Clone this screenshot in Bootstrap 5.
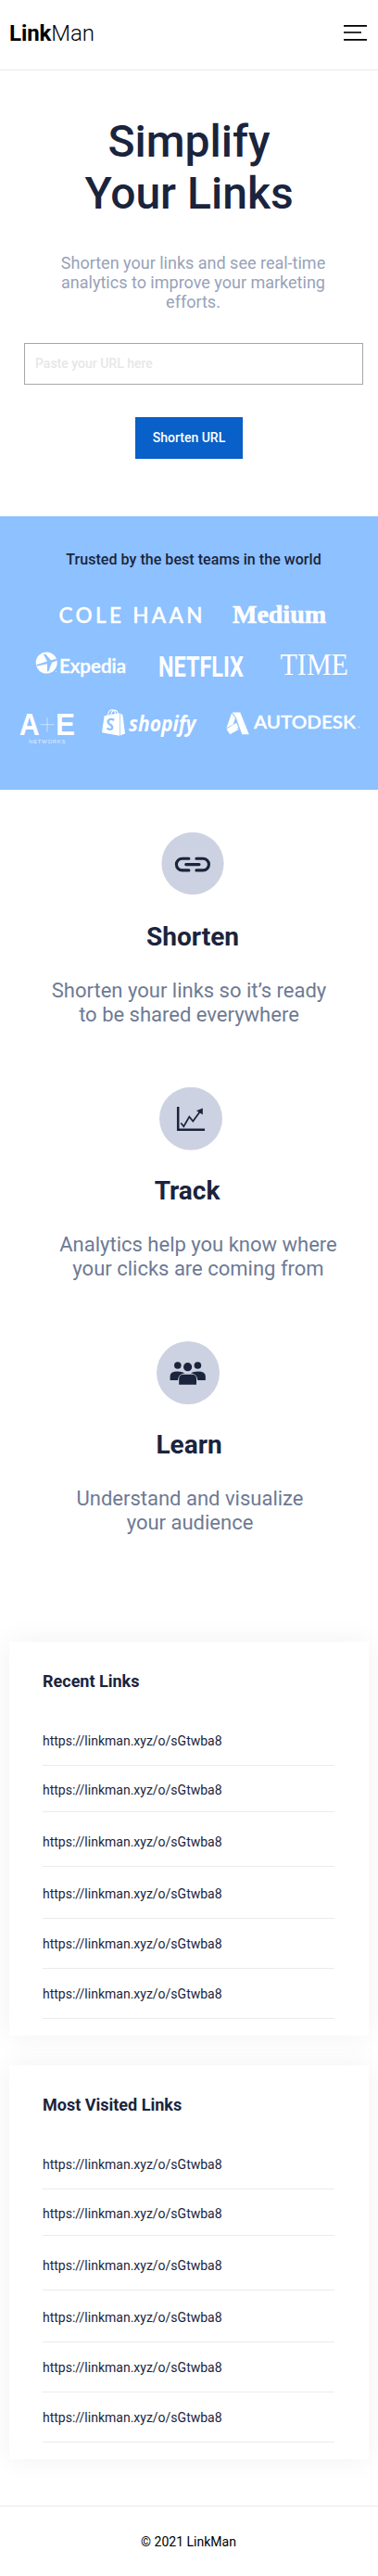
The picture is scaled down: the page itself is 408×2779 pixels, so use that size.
<!DOCTYPE html>
<html lang="en">
<head>
<meta charset="utf-8">
<meta name="viewport" content="width=device-width, initial-scale=1">
<title>LinkMan</title>
<link href="https://cdn.jsdelivr.net/npm/bootstrap@5.3.0/dist/css/bootstrap.min.css" rel="stylesheet">
<style>
:root { --ink: #1a243d; --line: #ebebeb; }
body { font-family: Roboto, sans-serif; color: var(--ink); background: #fff; }
svg { display: block; flex: none; }
.topbar { height: 76px; border-bottom: 1px solid var(--line); padding: 0 12px 0 10px; }
.brand-name { font-size: 24px; line-height: 28px; color: #000; font-weight: 300; margin-top: -3px; letter-spacing: -.1px; }
.brand-name b { font-weight: 700; }
.menu-btn { margin-top: -4px; }
.hero { padding: 49px 0 62px; }
.hero h1 { font-size: 48px; line-height: 56px; font-weight: 500; margin: 0 0 36px; }
.hero-text { font-size: 18px; line-height: 21px; color: #98a2b9; width: 300px; margin: 0 0 34px 9px; }
.url-input { height: 45px; width: 366px; margin: 0 0 35px 10px; border: 1px solid #a7a7a7; padding: 0 11px 2px; font-size: 14px; line-height: 24px; font-weight: 500; }
.url-input::placeholder { color: #e7e7e7; line-height: 24px; }
.btn-shorten { width: 116px; height: 45px; padding: 0; font-size: 14px; font-weight: 500; color: #fff; background: #0860c8; }
.trusted { height: 295px; background: #8dc1ff; padding-top: 37px; color: #fff; }
.trusted h2 { font-size: 16px; line-height: 19px; font-weight: 500; letter-spacing: .05px; margin: 0 0 27px 10px; color: var(--ink); }
.features { padding: 46px 0 115px; }
.feature + .feature { margin-top: 65px; }
.feature h3 { font-size: 28px; line-height: 33px; font-weight: 700; margin: 27px 0 29px; }
.feature p { font-size: 22px; line-height: 26px; color: #6e7a94; margin: 0; white-space: nowrap; }
.feature:first-child h3 { margin-top: 29px; }
.track-text { padding-left: 20px; }
.learn-icon { margin-right: 2px; }
.learn-text { padding-left: 2px; }
.card-stack { gap: 32px; }
.links-card { width: 388px; height: 425px; padding: 32px 37px 18px 36px; background: #fff; box-shadow: 0 0 30px rgba(0,0,0,.06); }
.links-card h4 { font-size: 18px; line-height: 21px; font-weight: 700; margin: 0 0 36px; }
.link-rows li { display: flex; align-items: flex-end; border-bottom: 1px solid var(--line); padding-bottom: 17px; font-size: 14px; line-height: 17px; height: 54px; }
.link-rows li:nth-child(1) { height: 45px; }
.link-rows li:nth-child(2) { height: 50px; padding-bottom: 14px; }
.link-rows li:nth-child(3) { height: 59px; }
.link-rows li:nth-child(4) { height: 56px; }
.page-end { height: 76px; margin-top: 50px; border-top: 1px solid var(--line); padding: 30px 1px 0 0; font-size: 14px; line-height: 17px; color: #000; }
</style>
</head>
<body>
<nav class="topbar d-flex justify-content-between align-items-center">
  <a class="brand-name text-decoration-none" href="#"><b>Link</b>Man</a>
  <button class="menu-btn btn border-0 p-0" aria-label="Menu">
    <svg width="25" height="17" fill="#000"><rect width="25" height="1.8"/><rect y="7.2" width="19" height="1.6"/><rect y="15" width="25" height="1.8"/></svg>
  </button>
</nav>

<header class="hero d-flex flex-column align-items-center text-center">
  <h1>Simplify<br>Your Links</h1>
  <p class="hero-text">Shorten your links and see real-time analytics to improve your marketing efforts.</p>
  <input class="url-input" type="text" placeholder="Paste your URL here">
  <button class="btn btn-shorten rounded-0 border-0">Shorten URL</button>
</header>

<section class="trusted">
  <h2 class="text-center">Trusted by the best teams in the world</h2>
  <div class="d-flex">
    <svg width="234" height="50" viewBox="0 640 234 50" fill="#fff">
      <text x="63.5" y="672" font-family="Lato, sans-serif" font-size="22.5" font-weight="500" textLength="155" stroke="#fff" stroke-width=".45">COLE HAAN</text>
    </svg>
    <svg width="174" height="50" viewBox="234 640 174 50" fill="#fff">
      <text x="251" y="672" font-family="'Liberation Serif', serif" font-weight="700" font-size="28" textLength="101" lengthAdjust="spacingAndGlyphs" stroke="#fff" stroke-width=".6">Medium</text>
    </svg>
  </div>
  <div class="d-flex">
    <svg width="154" height="55" viewBox="0 690 154 55" fill="#fff">
      <circle cx="50.2" cy="715" r="11.5"/>
      <path d="M39 717.2 L51 713.5 L47 706 L49 705.5 L55 712.2 L61 710.8 L61.8 712.4 L56 714.7 L52.5 724 L51 724.5 L51 716.2 L40 718.5Z" fill="#8dc1ff"/>
      <text x="64" y="725.7" font-family="Lato, sans-serif" font-weight="600" font-size="21" textLength="72" lengthAdjust="spacingAndGlyphs" stroke="#fff" stroke-width=".4">Expedia</text>
      <circle cx="136.5" cy="716" r=".6" opacity=".7"/><circle cx="60.5" cy="724.5" r=".6"/>
    </svg>
    <svg width="124" height="55" viewBox="154 690 124 55" fill="#fff">
      <text x="171" y="729.7" font-family="Roboto, sans-serif" font-weight="700" font-size="31" textLength="92" lengthAdjust="spacingAndGlyphs">NETFLIX</text>
    </svg>
    <svg width="130" height="55" viewBox="278 690 130 55" fill="#fff">
      <text x="302.5" y="728" font-family="'Liberation Serif', serif" font-size="33" textLength="73.5" lengthAdjust="spacingAndGlyphs">TIME</text>
    </svg>
  </div>
  <div class="d-flex">
    <svg width="96" height="70" viewBox="0 745 96 70" fill="#fff">
      <text x="20.7" y="793" font-family="'Liberation Sans', sans-serif" font-weight="700" font-size="33" textLength="22" lengthAdjust="spacingAndGlyphs">A</text>
      <path d="M43.5 781.7h15M51 774v15.5" stroke="#fff" stroke-width="1" opacity=".55"/>
      <text x="60" y="793" font-family="'Liberation Sans', sans-serif" font-weight="700" font-size="33" textLength="21" lengthAdjust="spacingAndGlyphs">E</text>
      <text x="31" y="801.7" font-family="'Liberation Sans', sans-serif" font-size="6" textLength="39.5" opacity=".75">NETWORKS</text>
    </svg>
    <svg width="132" height="70" viewBox="96 745 132 70" fill="#fff">
      <path d="M112.6 772.3 L129 769.2 V793.8 L110 790.3Z"/><path d="M129.7 769.3 L132.5 771.4 L135 791.5 L129.7 793.6Z"/>
      <path d="M116.5 772 C117 764 124.5 764 124.6 770.5 M119.8 771 C120.5 765 126 764.5 127.2 770" fill="none" stroke="#fff" stroke-width="1.1"/>
      <path d="M123.2 777 C119.5 774.5 116 776.7 116.8 779.5 C117.5 781.8 121.8 782.3 121.2 785.2 C120.7 787.7 117.4 787 115.5 785.6" fill="none" stroke="#8dc1ff" stroke-width="2.3"/>
      <text x="139" y="789" font-family="'Open Sans', sans-serif" font-weight="700" font-style="italic" font-size="22.5" textLength="72.5" lengthAdjust="spacingAndGlyphs">shopify</text>
    </svg>
    <svg width="180" height="70" viewBox="228 745 180 70" fill="#fff">
      <path d="M250.5 768.4 H259.3 L268.8 792.2 H261.3 L254.4 773.2 Z"/><path d="M250 769.4 L254 774.5 L251.7 781.5 L244.4 785.3 Z"/><path d="M244.6 786.7 L258.6 786.4 L248.3 792.2 Z"/><path d="M244.6 786.2 L255.3 779.7 L257.4 785.3 L248 791Z"/>
      <text x="274" y="786.2" font-family="Lato, sans-serif" font-weight="600" font-size="19.5" textLength="110" lengthAdjust="spacingAndGlyphs" stroke="#fff" stroke-width=".3">AUTODESK</text>
      <circle cx="387.4" cy="784.5" r="1.1" opacity=".6"/>
    </svg>
  </div>
</section>

<main>
  <section class="features text-center">
    <article class="feature d-flex flex-column align-items-center">
      <svg class="ms-2" width="68" height="67" viewBox="174.5 898 68 67">
        <circle cx="208.5" cy="931.5" r="33.6" fill="#ccd2e1"/>
        <path d="M204.4 926.2H197.2a6.3 6.3 0 0 0 0 12.7H204.4 M212.4 926.2H219.6a6.3 6.3 0 0 1 0 12.7H212.4 M201.2 932.6H215.5" fill="none" stroke="#1a243d" stroke-width="3.1" stroke-linecap="round"/>
      </svg>
      <h3 class="ps-2">Shorten</h3>
      <p>Shorten your links so it’s ready<br>to be shared everywhere</p>
    </article>
    <article class="feature d-flex flex-column align-items-center">
      <svg class="ms-1" width="68" height="68" viewBox="172 1173 68 68">
        <circle cx="206" cy="1206.8" r="34" fill="#ccd2e1"/>
        <path d="M192.2 1194V1218.7H221" fill="none" stroke="#1a243d" stroke-width="2.5"/>
        <path d="M195.3 1211.5L198.3 1215.2L204.3 1204.8L208.3 1209.6L216.4 1198.5" fill="none" stroke="#1a243d" stroke-width="1.7"/>
        <path d="M218.8 1195.6V1202.4L212 1198.3Z" fill="#1a243d"/>
      </svg>
      <h3 class="pe-1">Track</h3>
      <p class="track-text">Analytics help you know where<br>your clicks are coming from</p>
    </article>
    <article class="feature d-flex flex-column align-items-center">
      <svg class="learn-icon" width="68" height="68" viewBox="169 1447 68 68">
        <circle cx="203" cy="1481" r="34" fill="#ccd2e1"/>
        <g fill="#1a243d">
          <circle cx="191.8" cy="1473" r="3.8"/><circle cx="213.4" cy="1473" r="3.8"/><circle cx="202.6" cy="1474.7" r="4.6"/>
          <path d="M183.6 1489V1484.5Q183.8 1479.6 191.5 1479.5Q196.5 1479.5 199.3 1481.3Q192.3 1482.5 192 1489Z"/>
          <path d="M221.8 1489V1484.5Q221.5 1479.6 213.8 1479.5Q208.8 1479.5 206 1481.3Q213 1482.5 213.3 1489Z"/>
          <path d="M193.2 1493.8V1487Q193.4 1482.9 198 1482.7H207.3Q211.9 1482.9 212 1487V1493.8Z"/>
        </g>
      </svg>
      <h3>Learn</h3>
      <p class="learn-text">Understand and visualize<br>your audience</p>
    </article>
  </section>

  <div class="card-stack d-flex flex-column align-items-center">
    <section class="links-card">
      <h4>Recent Links</h4>
      <ul class="link-rows list-unstyled m-0">
        <li>https://linkman.xyz/o/sGtwba8</li><li>https://linkman.xyz/o/sGtwba8</li><li>https://linkman.xyz/o/sGtwba8</li>
        <li>https://linkman.xyz/o/sGtwba8</li><li>https://linkman.xyz/o/sGtwba8</li><li>https://linkman.xyz/o/sGtwba8</li>
      </ul>
    </section>
    <section class="links-card">
      <h4>Most Visited Links</h4>
      <ul class="link-rows list-unstyled m-0">
        <li>https://linkman.xyz/o/sGtwba8</li><li>https://linkman.xyz/o/sGtwba8</li><li>https://linkman.xyz/o/sGtwba8</li>
        <li>https://linkman.xyz/o/sGtwba8</li><li>https://linkman.xyz/o/sGtwba8</li><li>https://linkman.xyz/o/sGtwba8</li>
      </ul>
    </section>
  </div>
</main>

<footer class="page-end text-center">© 2021 LinkMan</footer>
<script src="https://cdn.jsdelivr.net/npm/bootstrap@5.3.0/dist/js/bootstrap.bundle.min.js"></script>
</body>
</html>
